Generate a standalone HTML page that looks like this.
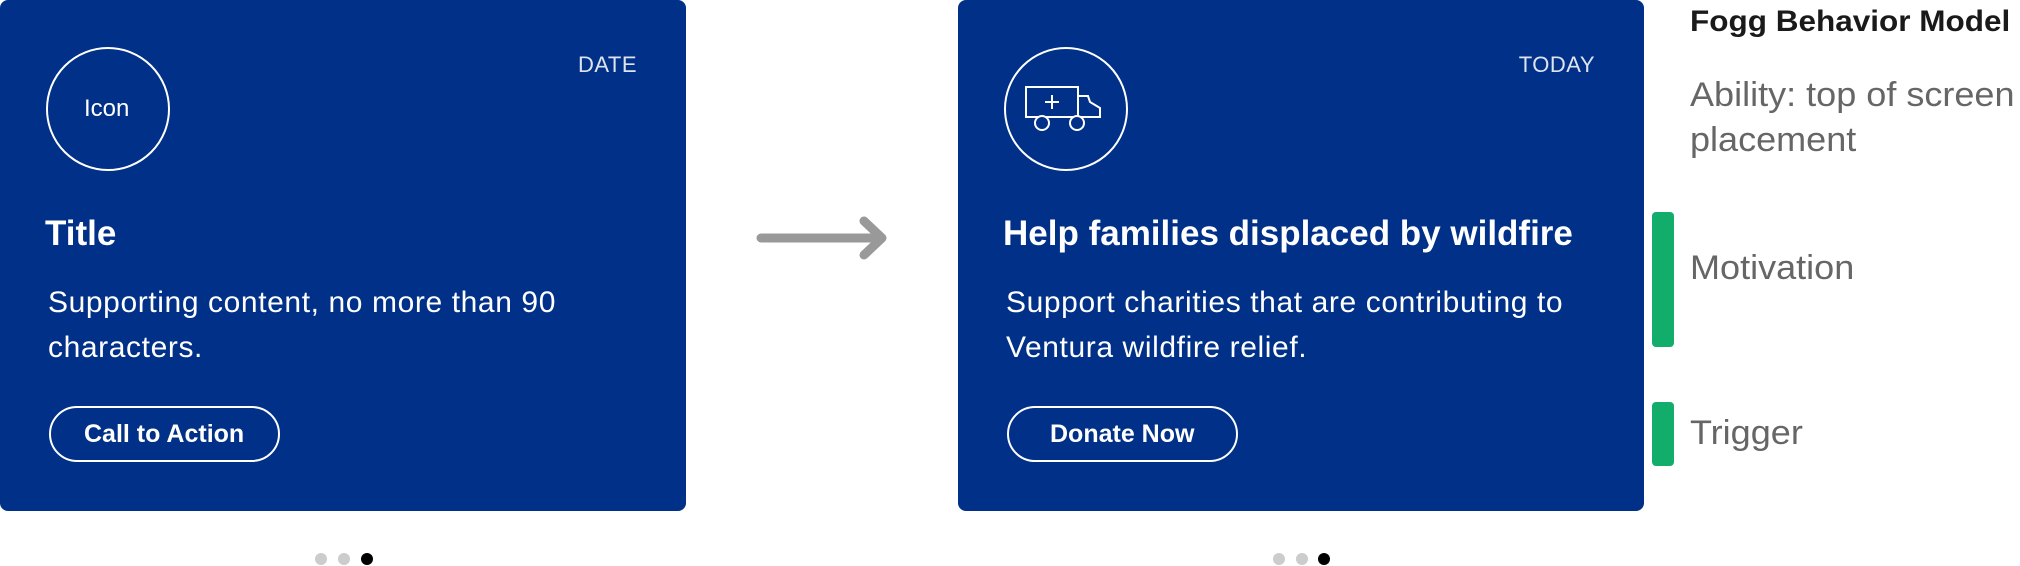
<!DOCTYPE html>
<html><head><meta charset="utf-8"><style>
*{margin:0;padding:0;box-sizing:border-box}
body{width:2020px;height:566px;background:#fff;position:relative;overflow:hidden;font-family:"Liberation Sans",sans-serif}
.card{position:absolute;top:0;width:686px;height:511px;background:#003087;border-radius:8px;color:#fff}
.circ{position:absolute;left:46px;top:47px;width:124px;height:124px;border:2px solid #fff;border-radius:50%}
.t{position:absolute;white-space:nowrap;transform-origin:left center}
.date{position:absolute;right:49px;top:52px;font-size:22px;color:#dfe3ee;letter-spacing:.5px}
.btn{position:absolute;left:49px;top:406px;height:56px;border:2px solid #fff;border-radius:28px}
.dot{position:absolute;top:553px;width:12px;height:12px;border-radius:50%;background:#ccc}
.bar{position:absolute;left:1652px;width:22px;background:#12ad6a;border-radius:4px}
.r{position:absolute;left:1690px;white-space:nowrap;color:#666;font-size:34px;transform-origin:left center;transform:scaleX(1.06)}
</style></head><body>
<div class="card" style="left:0">
 <div class="circ"></div>
 <div class="t" style="left:84px;top:95px;font-size:24px">Icon</div>
 <div class="date">DATE</div>
 <div class="t" style="left:45px;top:214px;font-size:35px;font-weight:bold">Title</div>
 <div class="t" style="left:48px;top:280px;font-size:30px;line-height:45px;letter-spacing:.6px">Supporting content, no more than 90<br>characters.</div>
 <div class="btn" style="width:231px"></div>
 <div class="t" style="left:84px;top:420px;font-size:25px;font-weight:bold">Call to Action</div>
</div>
<svg style="position:absolute;left:755px;top:215px" width="140" height="45"><path d="M6 23H127M109 6L127 23L109 40" stroke="#999" stroke-width="9" fill="none" stroke-linecap="round" stroke-linejoin="round"/></svg>
<div class="card" style="left:958px">
 <div class="circ"></div>
 <svg style="position:absolute;left:66px;top:84px" width="82" height="50" viewBox="0 0 82 50" fill="none" stroke="#fff" stroke-width="2"><path d="M2 3H54V33H2Z"/><path d="M54 12H64L66 18L76 24V33H54"/><path d="M28 11V25M21 18H35"/><circle cx="18" cy="39" r="7" fill="#003087"/><circle cx="53" cy="39" r="7" fill="#003087"/></svg>
 <div class="date">TODAY</div>
 <div class="t" style="left:45px;top:214px;font-size:35px;font-weight:bold">Help families displaced by wildfire</div>
 <div class="t" style="left:48px;top:280px;font-size:30px;line-height:45px;letter-spacing:.6px">Support charities that are contributing to<br>Ventura wildfire relief.</div>
 <div class="btn" style="width:231px"></div>
 <div class="t" style="left:92px;top:420px;font-size:25px;font-weight:bold">Donate Now</div>
</div>
<div class="dot" style="left:315px"></div><div class="dot" style="left:338px"></div><div class="dot" style="left:361px;background:#000"></div>
<div class="dot" style="left:1273px"></div><div class="dot" style="left:1296px"></div><div class="dot" style="left:1318px;background:#000"></div>
<div class="r" style="top:5px;font-size:30px;font-weight:bold;color:#1a1a1a;transform:scaleX(1.05)">Fogg Behavior Model</div>
<div class="r" style="top:73px;line-height:45px">Ability: top of screen<br>placement</div>
<div class="bar" style="top:212px;height:135px"></div>
<div class="bar" style="top:402px;height:64px"></div>
<div class="r" style="top:249px">Motivation</div>
<div class="r" style="top:414px">Trigger</div>
</body></html>
